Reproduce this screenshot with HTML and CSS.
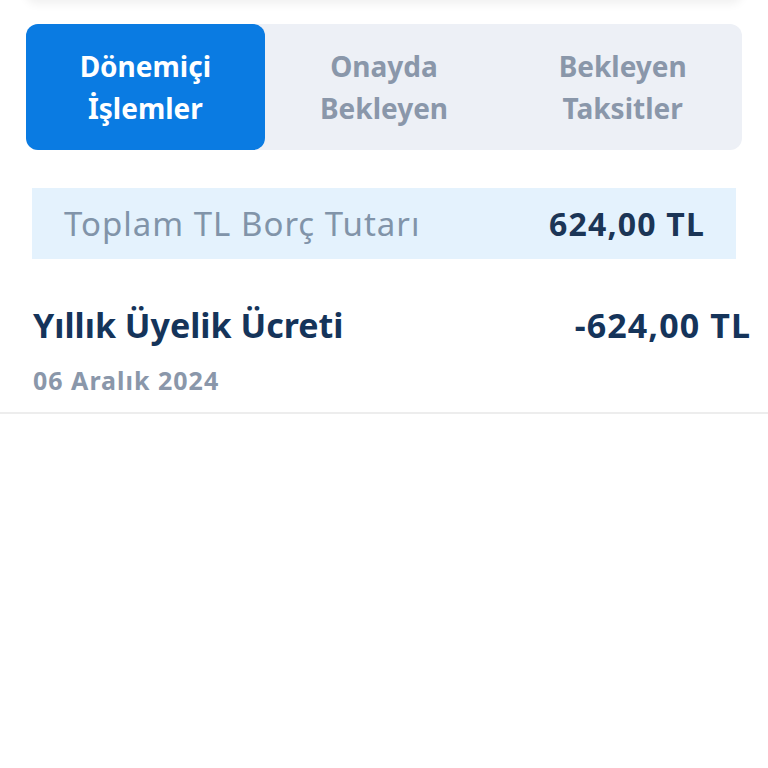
FILE: index.html
```html
<!DOCTYPE html>
<html lang="tr">
<head>
    <meta charset="UTF-8">
    <meta name="viewport" content="width=device-width, initial-scale=1.0">
    <title>Kart Hareketleri</title>
    <link rel="stylesheet" href="styles.css">
</head>
<body>
    <div class="top-card"></div>
    <div class="tabs">
        <div class="tab active">Dönemiçi<br>İşlemler</div>
        <div class="tab">Onayda<br>Bekleyen</div>
        <div class="tab">Bekleyen<br>Taksitler</div>
    </div>
    <div class="summary">
        <span class="summary-label">Toplam TL Borç Tutarı</span>
        <span class="summary-value">624,00 TL</span>
    </div>
    <div class="transaction">
        <div class="transaction-row">
            <span class="transaction-name">Yıllık Üyelik Ücreti</span>
            <span class="transaction-amount">-624,00 TL</span>
        </div>
        <div class="transaction-date">06 Aralık 2024</div>
    </div>
</body>
</html>
```

FILE: styles.css
```css
body {
    font-family: 'Noto Sans', 'Open Sans', sans-serif;
    background: #ffffff;
    margin: 0;
    padding: 0;
}
.top-card {
    height: 20px;
    margin: -20px 26px 0;
    background: white;
    border-radius: 12px;
    box-shadow: 0px 4px 10px rgba(0, 0, 0, 0.06);
}
.tabs {
    display: flex;
    margin: 24px 26px 0;
    height: 126px;
    background: #edf0f6;
    border-radius: 12px;
}
.tab {
    flex: 1;
    display: flex;
    align-items: center;
    justify-content: center;
    text-align: center;
    font-size: 28px;
    font-weight: 700;
    line-height: 42px;
    color: #8a97aa;
    border-radius: 12px;
}
.tab.active {
    background: #0a7be2;
    color: white;
}
.summary {
    display: flex;
    justify-content: space-between;
    align-items: center;
    margin: 38px 32px 0;
    height: 71px;
    padding: 0 32px;
    background: #e4f2fd;
}
.summary-label {
    font-size: 33px;
    letter-spacing: 1px;
    color: #8194a9;
}
.summary-value {
    font-size: 32px;
    font-weight: 700;
    letter-spacing: 1.2px;
    margin-right: -1px;
    color: #1b3556;
}
.transaction {
    padding: 43px 18px 15px 33px;
    border-bottom: 2px solid #ededed;
}
.transaction-row {
    display: flex;
    justify-content: space-between;
    align-items: center;
}
.transaction-name, .transaction-amount {
    font-size: 34px;
    font-weight: 700;
    color: #15345a;
}
.transaction-amount {
    letter-spacing: 1.1px;
    margin-right: -1px;
}
.transaction-date {
    margin-top: 15px;
    font-size: 25px;
    font-weight: 700;
    letter-spacing: 1px;
    color: #8a97aa;
}
```
